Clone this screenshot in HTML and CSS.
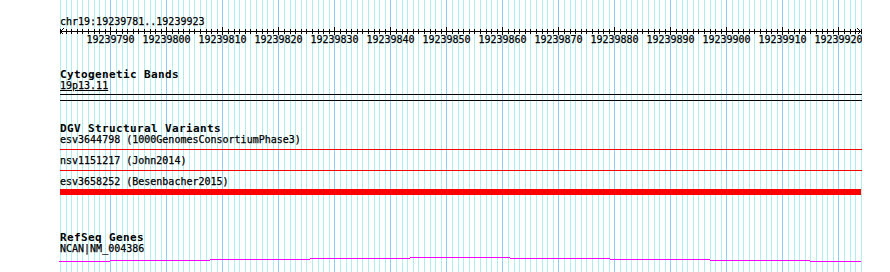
FILE: index.html
```html
<!DOCTYPE html>
<html lang="en">
<head>
<meta charset="utf-8">
<title>chr19:19239781..19239923</title>
<link rel="stylesheet" href="styles.css">
</head>
<body>
<div class="browser">
  <svg class="grid" width="890" height="272" aria-hidden="true">
    <defs>
      <pattern id="gridtile" x="60" y="0" width="56" height="272" patternUnits="userSpaceOnUse">
        <rect x="0" width="1" height="272" class="minor"/>
        <rect x="6" width="1" height="272" class="minor"/>
        <rect x="11" width="1" height="272" class="minor"/>
        <rect x="17" width="1" height="272" class="minor"/>
        <rect x="22" width="1" height="272" class="minor"/>
        <rect x="28" width="1" height="272" class="minor"/>
        <rect x="34" width="1" height="272" class="minor"/>
        <rect x="39" width="1" height="272" class="minor"/>
        <rect x="45" width="1" height="272" class="minor"/>
        <rect x="50" width="1" height="272" class="major"/>
      </pattern>
    </defs>
    <rect x="60" y="0" width="802" height="272" fill="url(#gridtile)"/>
  </svg>

  <div class="panel">
    <div class="pos">chr19:19239781..19239923</div>

    <svg class="ruler" width="802" height="18">
      <defs>
        <pattern id="ticks" x="0" y="0" width="56" height="18" patternUnits="userSpaceOnUse">
          <rect class="tick" x="0" y="2" width="1" height="5"/>
          <rect class="tick" x="6" y="2" width="1" height="5"/>
          <rect class="tick" x="11" y="2" width="1" height="5"/>
          <rect class="tick" x="17" y="2" width="1" height="5"/>
          <rect class="tick" x="22" y="2" width="1" height="5"/>
          <rect class="tick" x="28" y="2" width="1" height="5"/>
          <rect class="tick" x="34" y="2" width="1" height="5"/>
          <rect class="tick" x="39" y="2" width="1" height="5"/>
          <rect class="tick" x="45" y="2" width="1" height="5"/>
          <rect class="tick" x="50" y="0" width="1" height="8"/>
        </pattern>
      </defs>
      <rect class="tick-row" x="0" y="0" width="802" height="9"/>
      <rect class="axis" x="0" y="4" width="802" height="1"/>
      <path class="arrow" d="M3.5 1.5 L0.5 4.5 L3.5 7.5"/>
      <path class="arrow" d="M797.5 1.5 L800.5 4.5 L797.5 7.5"/>
      <g class="tick-labels">
        <text x="50.5" y="16">19239790</text>
        <text x="106.5" y="16">19239800</text>
        <text x="162.5" y="16">19239810</text>
        <text x="218.5" y="16">19239820</text>
        <text x="274.5" y="16">19239830</text>
        <text x="330.5" y="16">19239840</text>
        <text x="386.5" y="16">19239850</text>
        <text x="442.5" y="16">19239860</text>
        <text x="498.5" y="16">19239870</text>
        <text x="554.5" y="16">19239880</text>
        <text x="610.5" y="16">19239890</text>
        <text x="666.5" y="16">19239900</text>
        <text x="722.5" y="16">19239910</text>
        <text x="778.5" y="16">19239920</text>
      </g>
    </svg>

    <section class="track track-cyto">
      <h2 class="track-title">Cytogenetic Bands</h2>
      <div class="label"><span class="ul">19p13.11</span></div>
      <div class="band"></div>
    </section>

    <section class="track track-dgv">
      <h2 class="track-title">DGV Structural Variants</h2>
      <div class="label">esv3644798 (1000GenomesConsortiumPhase3)</div>
      <div class="sv-line"></div>
      <div class="label label-gap">nsv1151217 (John2014)</div>
      <div class="sv-line"></div>
      <div class="label label-gap">esv3658252 (Besenbacher2015)</div>
      <div class="sv-bar"></div>
    </section>

    <section class="track track-refseq">
      <h2 class="track-title">RefSeq Genes</h2>
      <div class="label">NCAN|NM_004386</div>
      <svg class="gene" width="803" height="8" aria-hidden="true">
        <rect x="0" y="6" width="51" height="1"/>
        <rect x="51" y="5" width="100" height="1"/>
        <rect x="151" y="4" width="100" height="1"/>
        <rect x="251" y="3" width="100" height="1"/>
        <rect x="351" y="2" width="100" height="1"/>
        <rect x="451" y="3" width="100" height="1"/>
        <rect x="551" y="4" width="100" height="1"/>
        <rect x="651" y="5" width="100" height="1"/>
        <rect x="751" y="6" width="51" height="1"/>
      </svg>
    </section>
  </div>
</div>
</body>
</html>
```

FILE: styles.css
```css
html,
body {
  margin: 0;
  padding: 0;
  background: #ffffff;
  overflow: hidden;
}

body {
  width: 890px;
  height: 272px;
  font-family: "DejaVu Sans Mono", "Liberation Mono", monospace;
  font-size: 10px;
  line-height: 13px;
  color: #000000;
  -webkit-text-stroke: 0.25px #000000;
}

.browser {
  position: relative;
  width: 890px;
  height: 272px;
  overflow: hidden;
}

.grid {
  position: absolute;
  left: 0;
  top: 0;
  shape-rendering: crispEdges;
}

.grid .minor {
  fill: #afeeee;
}

.grid .major {
  fill: #87cefa;
}

.panel {
  position: relative;
  width: 802px;
  padding: 15px 0 0 60px;
}

.pos {
  height: 12px;
  white-space: pre;
}

.ruler {
  display: block;
  shape-rendering: crispEdges;
}

.ruler .tick,
.ruler .axis {
  fill: #000000;
}

.ruler .tick-row {
  fill: url(#ticks);
}

.ruler .arrow {
  fill: none;
  stroke: #000000;
  stroke-width: 1;
}

.tick-labels text {
  font-family: "DejaVu Sans Mono", "Liberation Mono", monospace;
  font-size: 10px;
  text-anchor: middle;
  fill: #000000;
  stroke: #000000;
  stroke-width: 0.25px;
  shape-rendering: auto;
}

.track-title {
  margin: 0;
  height: 11px;
  font-size: 11px;
  line-height: 13px;
  font-weight: bold;
  letter-spacing: 0.38px;
  white-space: pre;
  -webkit-text-stroke: 0;
}

.label {
  height: 13px;
  white-space: pre;
}

.label-gap {
  margin-top: 4px;
}

.ul {
  text-decoration: underline;
}

.track-cyto {
  margin-top: 23px;
}

.band {
  box-sizing: border-box;
  width: 802px;
  height: 7px;
  margin-top: 2px;
  border-top: 1px solid #000000;
  border-bottom: 1px solid #000000;
}

.track-dgv {
  margin-top: 21px;
}

.sv-line {
  width: 802px;
  height: 1px;
  margin-top: 3px;
  background: #ff0000;
}

.sv-bar {
  width: 801px;
  height: 6px;
  margin-top: 1px;
  background: #ff0000;
}

.track-refseq {
  margin-top: 36px;
}

.gene {
  display: block;
  margin-left: -1px;
  shape-rendering: crispEdges;
}

.gene rect {
  fill: #ff00ff;
}
```
